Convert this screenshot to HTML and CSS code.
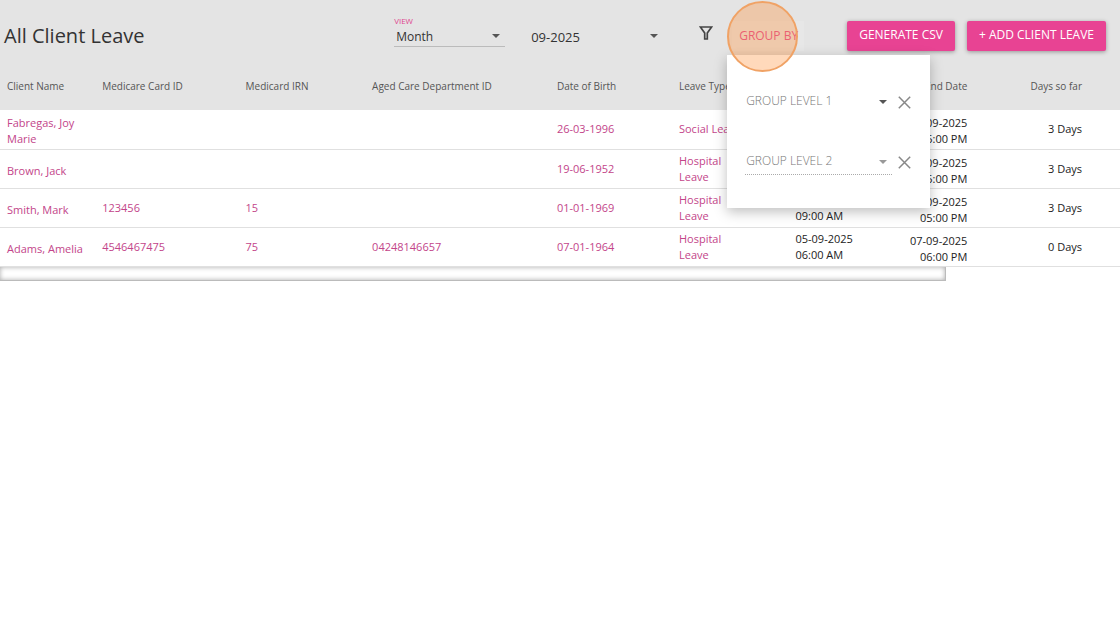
FILE: index.html
```html
<!DOCTYPE html>
<html lang="en">
<head>
  <meta charset="UTF-8">
  <meta name="viewport" content="width=device-width, initial-scale=1">
  <title>All Client Leave</title>
  <link rel="stylesheet" href="styles.css">
</head>
<body>
  <header class="toolbar">
    <h1>All Client Leave</h1>

    <div class="view-field">
      <label for="view">VIEW</label>
      <span class="select">
        <select id="view">
          <option>Month</option>
          <option>Week</option>
        </select>
      </span>
    </div>

    <span class="select period">
      <select id="period" aria-label="Period">
        <option>09-2025</option>
        <option>08-2025</option>
      </select>
    </span>

    <button class="filter" type="button" aria-label="Filter">
      <svg width="14" height="14" viewBox="0 0 14 14" fill="none" stroke="#444" stroke-width="1.7">
        <path d="M1.4 1H12.6L8.3 7V13H5.7V7Z"/>
      </svg>
    </button>

    <div class="group">
      <button class="group-by" type="button">GROUP BY</button>
      <div class="group-menu">
        <div class="level">
          <span class="select">
            <select aria-label="Group level 1">
              <option>GROUP LEVEL 1</option>
            </select>
          </span>
          <button class="clear" type="button" aria-label="Clear group level 1">
            <svg width="13" height="13" viewBox="0 0 13 13" stroke="#888" stroke-width="1.5"><path d="M.8.8 12.2 12.2M12.2.8.8 12.2"/></svg>
          </button>
        </div>
        <div class="level disabled">
          <span class="select">
            <select aria-label="Group level 2" disabled>
              <option>GROUP LEVEL 2</option>
            </select>
          </span>
          <button class="clear" type="button" aria-label="Clear group level 2">
            <svg width="13" height="13" viewBox="0 0 13 13" stroke="#888" stroke-width="1.5"><path d="M.8.8 12.2 12.2M12.2.8.8 12.2"/></svg>
          </button>
        </div>
      </div>
      <span class="pointer"></span>
    </div>

    <div class="actions">
      <button class="button" type="button">GENERATE CSV</button>
      <button class="button" type="button">+ ADD CLIENT LEAVE</button>
    </div>
  </header>

  <table class="leave">
    <thead>
      <tr>
        <th class="name">Client Name</th>
        <th class="card">Medicare Card ID</th>
        <th class="irn">Medicard IRN</th>
        <th class="dept">Aged Care Department ID</th>
        <th class="dob">Date of Birth</th>
        <th class="type">Leave Type</th>
        <th class="start">Start Date</th>
        <th class="end">End Date</th>
        <th class="days">Days so far</th>
      </tr>
    </thead>
    <tbody>
      <tr>
        <td class="name">Fabregas, Joy Marie</td>
        <td></td>
        <td></td>
        <td></td>
        <td>26-03-1996</td>
        <td>Social Leave</td>
        <td class="start">01-09-2025<br>09:00 AM</td>
        <td class="end">03-09-2025<br>05:00 PM</td>
        <td class="days">3 Days</td>
      </tr>
      <tr>
        <td class="name">Brown, Jack</td>
        <td></td>
        <td></td>
        <td></td>
        <td>19-06-1952</td>
        <td>Hospital<br>Leave</td>
        <td class="start">01-09-2025<br>09:00 AM</td>
        <td class="end">03-09-2025<br>05:00 PM</td>
        <td class="days">3 Days</td>
      </tr>
      <tr>
        <td class="name">Smith, Mark</td>
        <td>123456</td>
        <td>15</td>
        <td></td>
        <td>01-01-1969</td>
        <td>Hospital<br>Leave</td>
        <td class="start">01-09-2025<br>09:00 AM</td>
        <td class="end">03-09-2025<br>05:00 PM</td>
        <td class="days">3 Days</td>
      </tr>
      <tr>
        <td class="name">Adams, Amelia</td>
        <td>4546467475</td>
        <td>75</td>
        <td>04248146657</td>
        <td>07-01-1964</td>
        <td>Hospital<br>Leave</td>
        <td class="start">05-09-2025<br>06:00 AM</td>
        <td class="end">07-09-2025<br>06:00 PM</td>
        <td class="days">0 Days</td>
      </tr>
    </tbody>
  </table>
  <div class="scroll-track"></div>
</body>
</html>
```
FILE: styles.css
```css
* {
  box-sizing: border-box;
}

body {
  margin: 0;
  background: #fff;
  color: #333;
  font-family: "Open Sans", "Noto Sans", sans-serif;
  font-size: 11px;
  line-height: 16px;
}

button, select {
  font-family: inherit;
  border: none;
  background: none;
  padding: 0;
  margin: 0;
}

button {
  cursor: pointer;
}

svg {
  display: block;
}

.toolbar {
  display: flex;
  align-items: center;
  height: 71px;
  padding: 0 14px 0 4px;
  background: #e4e4e4;
}

h1 {
  margin: 0 auto 0 0;
  font-size: 20px;
  font-weight: 400;
  line-height: 28px;
  white-space: nowrap;
}

/* drop-downs */
.select {
  position: relative;
  display: block;
}

.select::after {
  content: "";
  position: absolute;
  right: 5px;
  top: 50%;
  margin-top: -2px;
  border: 4px solid transparent;
  border-top-color: #555;
  border-bottom: none;
  pointer-events: none;
}

.select select {
  appearance: none;
  display: block;
  width: 100%;
  height: 20px;
  color: #333;
  font-size: 12px;
  opacity: 1;
}

.view-field {
  width: 111px;
  margin-right: 26px;
  padding-bottom: 8px;
}

.view-field label {
  display: block;
  height: 10px;
  color: #e0468f;
  font-size: 8px;
  line-height: 10px;
}

.view-field .select {
  padding-left: 2px;
  border-bottom: 1px solid #bbb;
}

.period {
  width: 132px;
  margin-right: 36px;
  padding-top: 2px;
}

.period select {
  font-size: 13px;
}

.filter {
  margin-right: 19px;
  padding-bottom: 6px;
}

.group {
  position: relative;
  margin-right: 43px;
}

.group-by {
  display: block;
  width: 72px;
  height: 30px;
  padding-left: 1px;
  background: #e7e7e7;
  color: #e0468f;
  font-size: 12px;
  font-weight: 500;
  white-space: nowrap;
}

.group-menu {
  position: absolute;
  z-index: 1;
  top: 34px;
  left: -5px;
  width: 203px;
  height: 153px;
  padding: 36px 18px;
  background: #fff;
  box-shadow: 0 4px 12px rgba(0, 0, 0, 0.25);
}

.level {
  display: flex;
  align-items: center;
  gap: 6px;
  margin-bottom: 36px;
}

.level .select {
  width: 147px;
  height: 24px;
  border-bottom: 1px solid transparent;
}

.level select {
  padding-left: 1px;
  color: #777;
  font-size: 12px;
  font-weight: 300;
}

.disabled .select {
  border-bottom: 1px dotted #aaa;
}

.disabled .select::after {
  border-top-color: #999;
}

.pointer {
  position: absolute;
  z-index: 2;
  top: -20px;
  left: -5px;
  width: 71px;
  height: 71px;
  border: 2px solid #f0a265;
  border-radius: 50%;
  background: rgba(255, 145, 60, 0.35);
  pointer-events: none;
}

.actions {
  display: flex;
  gap: 12px;
}

.button {
  height: 30px;
  padding: 0 12px 2px;
  border-radius: 2px;
  background: #e84393;
  color: #fff;
  font-size: 12px;
  white-space: nowrap;
  box-shadow: 0 1px 4px rgba(0, 0, 0, 0.35);
}

/* leave table */
.leave {
  width: 100%;
  table-layout: fixed;
  border-collapse: collapse;
}

.leave th {
  height: 39px;
  padding: 0 7px 9px;
  background: #e4e4e4;
  color: #555;
  font-size: 10px;
  font-weight: 500;
  text-align: left;
  white-space: nowrap;
}

.leave td {
  height: 39px;
  padding: 3px 7px;
  border-bottom: 1px solid #e0e0e0;
  color: #c3458a;
}

.leave .name { width: 8.5%; }
.leave .card { width: 12.8%; }
.leave .irn { width: 11.3%; }
.leave .dept { width: 16.5%; }
.leave .dob { width: 10.9%; }
.leave .type { width: 10.4%; }
.leave .start { width: 7.8%; }
.leave .end { width: 8.8%; }
.leave .days { width: 13%; }

.leave td.name,
.leave td.end {
  padding-top: 5px;
  padding-bottom: 1px;
}

.leave td.start,
.leave td.end,
.leave td.days {
  color: #222;
}

.leave .end,
.leave .days {
  text-align: right;
}

.leave .days {
  padding-right: 38px;
}

.scroll-track {
  width: 84.5%;
  height: 14px;
  border: solid #bbb;
  border-width: 0 1px 1px 0;
  box-shadow: inset 0 0 5px #aaa;
}
```
